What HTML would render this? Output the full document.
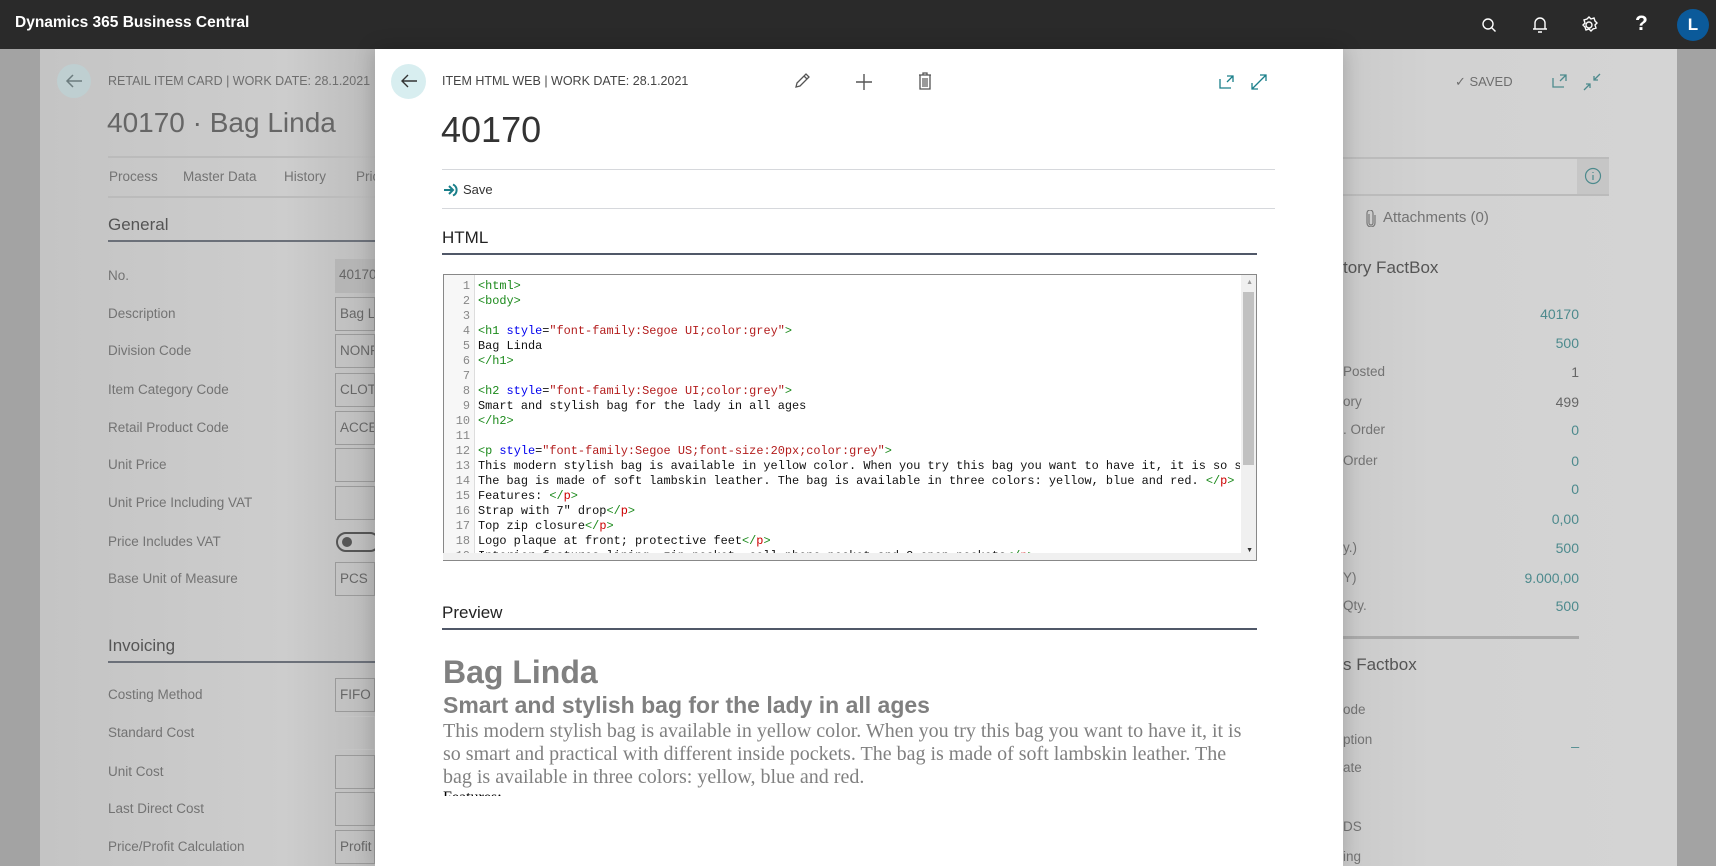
<!DOCTYPE html>
<html><head><meta charset="utf-8"><style>
*{margin:0;padding:0;box-sizing:border-box}
body{width:1716px;height:866px;overflow:hidden;background:#a3a3a3;font-family:"Liberation Sans",sans-serif;position:relative}
.abs{position:absolute;white-space:nowrap}
#top{position:absolute;left:0;top:0;width:1716px;height:49px;background:#2a2a2a}
#panel{position:absolute;left:40px;top:49px;width:1637px;height:817px;background:linear-gradient(90deg,#c4c4c4 0%,#cdcdcd 15%,#bdbdbd 20%,#d0d0d0 72%,#c2c2c2 74%,#d2d2d2 85%,#d4d4d4 100%)}
.g{color:#6e6e6e}
.lab{font-size:13.5px;color:#737373}
.inp{position:absolute;left:335px;width:40px;height:34px;border:1px solid #999;font-size:13.5px;color:#666;padding:8px 4px;overflow:hidden;white-space:nowrap}
.v{position:absolute;right:137px;font-size:14px;color:#4d8a8d;text-align:right}
#modal{position:absolute;left:375px;top:49px;width:968px;height:817px;background:#fff;box-shadow:0 0 20px rgba(0,0,0,.2)}
.code{position:absolute;left:478px;font-family:"Liberation Mono",monospace;font-size:11.9px;color:#111;white-space:pre;line-height:15px}
.ln{position:absolute;left:443px;width:27px;text-align:right;font-family:"Liberation Mono",monospace;font-size:11.9px;color:#888;line-height:15px}
.t{color:#1c8a1c}.a{color:#0000ee}.s{color:#b31d1d}.r{color:#c00}
</style></head><body>
<div id="top"><div class="abs" style="left:15px;top:14px;color:#fff;font-size:15.5px;font-weight:bold">Dynamics 365 Business Central</div>
<svg class="abs" style="left:1480px;top:16px" width="18" height="18" fill="none" stroke="#fff" stroke-width="1.4"><circle cx="8" cy="8" r="5"/><path d="M11.5 11.5l4 4"/></svg>
<svg class="abs" style="left:1531px;top:15px" width="18" height="20" fill="none" stroke="#fff" stroke-width="1.4"><path d="M4 14V8a5 5 0 0110 0v6H4zM2 14h14M7 17h4"/></svg>
<svg class="abs" style="left:1579px;top:15px" width="20" height="20" fill="none" stroke="#fff" stroke-width="1.4"><circle cx="10" cy="10" r="3"/><path d="M10 2l2 2 3-1 1 3 2 2-2 2 1 3-3 1-2 2-2-2-3 1-1-3-2-2 2-2-1-3 3-1z"/></svg>
<div class="abs" style="left:1635px;top:12px;color:#fff;font-size:21px;font-weight:bold">?</div>
<div class="abs" style="left:1677px;top:9px;width:32px;height:32px;border-radius:50%;background:#0b5a9a;color:#fff;font-size:17px;text-align:center;line-height:32px;font-weight:bold">L</div>
</div>
<div id="panel"></div>
<div class="abs" style="left:57px;top:64px;width:34px;height:34px;border-radius:50%;background:#bfcfd1"></div>
<svg class="abs" style="left:64px;top:72px" width="20" height="18" fill="none" stroke="#6c7c7e" stroke-width="1.5"><path d="M18 9H3M9 3L3 9l6 6"/></svg>
<div class="abs g" style="left:108px;top:74px;font-size:12.5px">RETAIL ITEM CARD | WORK DATE: 28.1.2021</div>
<div class="abs g" style="left:107px;top:107px;font-size:28px;color:#666">40170 · Bag Linda</div>
<div class="abs" style="left:108px;top:156px;width:270px;border-top:2px solid #bbb"></div>
<div class="abs lab" style="left:109px;top:169px">Process</div><div class="abs lab" style="left:183px;top:169px">Master Data</div><div class="abs lab" style="left:284px;top:169px">History</div><div class="abs lab" style="left:356px;top:169px">Pric</div>
<div class="abs" style="left:108px;top:196px;width:270px;border-top:2px solid #bbb"></div>
<div class="abs" style="left:108px;top:215px;font-size:17px;color:#555">General</div>
<div class="abs" style="left:108px;top:240px;width:270px;border-top:2px solid #6b7079"></div>
<div class="abs" style="left:108px;top:636px;font-size:17px;color:#555">Invoicing</div>
<div class="abs" style="left:108px;top:661px;width:270px;border-top:2px solid #6b7079"></div>
<div class="abs lab" style="left:108px;top:268px">No.</div><div class="inp" style="top:259px;background:#b5b5b5;border:none">40170</div>
<div class="abs lab" style="left:108px;top:306px">Description</div><div class="inp" style="top:297px">Bag Linda</div>
<div class="abs lab" style="left:108px;top:343px">Division Code</div><div class="inp" style="top:334px">NONF</div>
<div class="abs lab" style="left:108px;top:382px">Item Category Code</div><div class="inp" style="top:373px">CLOTH</div>
<div class="abs lab" style="left:108px;top:420px">Retail Product Code</div><div class="inp" style="top:411px">ACCES</div>
<div class="abs lab" style="left:108px;top:457px">Unit Price</div><div class="inp" style="top:448px"></div>
<div class="abs lab" style="left:108px;top:495px">Unit Price Including VAT</div><div class="inp" style="top:486px"></div>
<div class="abs lab" style="left:108px;top:534px">Price Includes VAT</div><div class="abs" style="left:336px;top:532px;width:44px;height:20px;border:2px solid #555;border-radius:10px"><div style="width:10px;height:10px;border-radius:50%;background:#555;margin:3px 4px"></div></div>
<div class="abs lab" style="left:108px;top:571px">Base Unit of Measure</div><div class="inp" style="top:562px">PCS</div>
<div class="abs lab" style="left:108px;top:687px">Costing Method</div><div class="inp" style="top:678px">FIFO</div>
<div class="abs lab" style="left:108px;top:725px">Standard Cost</div><div class="inp" style="top:716px;border-color:#c4c4c4"></div>
<div class="abs lab" style="left:108px;top:764px">Unit Cost</div><div class="inp" style="top:755px"></div>
<div class="abs lab" style="left:108px;top:801px">Last Direct Cost</div><div class="inp" style="top:792px"></div>
<div class="abs lab" style="left:108px;top:839px">Price/Profit Calculation</div><div class="inp" style="top:830px">Profit</div>
<div class="abs g" style="left:1455px;top:74px;font-size:13px">✓ SAVED</div>
<svg class="abs" style="left:1551px;top:73px" width="18" height="16" fill="none" stroke="#4d8a8d" stroke-width="1.3"><path d="M2 5v9h11M9 2h6v6M15 2l-6 6"/></svg>
<svg class="abs" style="left:1583px;top:73px" width="18" height="18" fill="none" stroke="#4d8a8d" stroke-width="1.3"><path d="M17 1l-6 6M11 3v4h4M1 17l6-6M3 11h4v4"/></svg>
<div class="abs" style="left:1342px;top:157px;width:267px;height:39px;border-top:2px solid #bbb;border-bottom:2px solid #bbb"></div>
<div class="abs" style="left:1577px;top:159px;width:32px;height:35px;background:#c6c6c6"></div>
<svg class="abs" style="left:1584px;top:167px" width="18" height="18" fill="none" stroke="#4d8a8d" stroke-width="1.2"><circle cx="9" cy="9" r="7.5"/><path d="M9 8v5M9 5v1"/></svg>
<svg class="abs" style="left:1366px;top:210px" width="10" height="17" fill="none" stroke="#777" stroke-width="1.2"><path d="M3 4v9a2 2 0 004 0V3a3 3 0 00-6 0v10a4 4 0 008 0V5"/></svg>
<div class="abs lab" style="left:1383px;top:209px;font-size:15px">Attachments (0)</div>
<div class="abs" style="left:1343px;top:258px;font-size:17px;color:#555">tory FactBox</div>
<div class="v" style="top:306px">40170</div><div class="v" style="top:335px">500</div>
<div class="abs lab" style="left:1343px;top:364px">Posted</div><div class="v" style="top:364px;color:#666">1</div>
<div class="abs lab" style="left:1343px;top:394px">ory</div><div class="v" style="top:394px;color:#666">499</div>
<div class="abs lab" style="left:1343px;top:422px">. Order</div><div class="v" style="top:422px">0</div>
<div class="abs lab" style="left:1343px;top:453px">Order</div><div class="v" style="top:453px">0</div>
<div class="v" style="top:481px">0</div><div class="v" style="top:511px">0,00</div>
<div class="abs lab" style="left:1343px;top:540px">y.)</div><div class="v" style="top:540px">500</div>
<div class="abs lab" style="left:1343px;top:570px">Y)</div><div class="v" style="top:570px">9.000,00</div>
<div class="abs lab" style="left:1343px;top:598px">Qty.</div><div class="v" style="top:598px">500</div>
<div class="abs" style="left:1343px;top:636px;width:236px;border-top:3px solid #aaa"></div>
<div class="abs" style="left:1343px;top:655px;font-size:17px;color:#555">s Factbox</div>
<div class="abs lab" style="left:1343px;top:702px">ode</div><div class="abs lab" style="left:1343px;top:732px">ption</div><div class="v" style="top:732px">_</div>
<div class="abs lab" style="left:1343px;top:760px">ate</div><div class="abs lab" style="left:1343px;top:819px">DS</div><div class="abs lab" style="left:1343px;top:849px">ing</div>
<div id="modal"></div>
<div class="abs" style="left:391px;top:64px;width:35px;height:35px;border-radius:50%;background:#d8eef0"></div>
<svg class="abs" style="left:399px;top:72px" width="20" height="18" fill="none" stroke="#333" stroke-width="1.4"><path d="M18 9H3M9 3L3 9l6 6"/></svg>
<div class="abs" style="left:442px;top:74px;font-size:12.5px;color:#444">ITEM HTML WEB | WORK DATE: 28.1.2021</div>
<svg class="abs" style="left:793px;top:72px" width="18" height="18" fill="none" stroke="#555" stroke-width="1.3"><path d="M3 15l1-4 9-9 3 3-9 9zM11 4l3 3"/></svg>
<svg class="abs" style="left:855px;top:73px" width="18" height="18" fill="none" stroke="#555" stroke-width="1.4"><path d="M9 1v16M1 9h16"/></svg>
<svg class="abs" style="left:918px;top:72px" width="14" height="18" fill="none" stroke="#555" stroke-width="1.3"><path d="M1 3h12M5 3V1h4v2M2 3v14h10V3"/><rect x="4" y="6" width="6" height="9" fill="#999" stroke="none"/></svg>
<svg class="abs" style="left:1218px;top:74px" width="18" height="16" fill="none" stroke="#1a7f8a" stroke-width="1.3"><path d="M2 5v9h11M9 2h6v6M15 2l-6 6"/></svg>
<svg class="abs" style="left:1250px;top:73px" width="18" height="18" fill="none" stroke="#1a7f8a" stroke-width="1.3"><path d="M2 16L16 2M10 2h6v6M2 10v6h6"/></svg>
<div class="abs" style="left:441px;top:109px;font-size:36px;color:#333">40170</div>
<div class="abs" style="left:442px;top:169px;width:833px;border-top:1.5px solid #d6d8dc"></div>
<svg class="abs" style="left:443px;top:183px" width="16" height="14" fill="none" stroke="#1a7f8a" stroke-width="2"><path d="M1 7h8M6 3l4 4-4 4M10 1.5a6 6 0 010 11"/></svg>
<div class="abs" style="left:463px;top:182px;font-size:13px;color:#333">Save</div>
<div class="abs" style="left:442px;top:208px;width:833px;border-top:1.5px solid #d6d8dc"></div>
<div class="abs" style="left:442px;top:228px;font-size:17px;color:#222">HTML</div>
<div class="abs" style="left:442px;top:253px;width:815px;border-top:2px solid #505868"></div>
<div class="abs" style="left:443px;top:274px;width:814px;height:287px;border:1px solid #888;overflow:hidden;background:#fff">
<div style="position:absolute;left:0;top:0;width:31px;height:100%;background:#f7f7f7;border-right:1px solid #ddd"></div>
<div style="position:absolute;right:0;top:0;width:15px;height:100%;background:#f0f0f0"></div>
<div style="position:absolute;right:2px;top:17px;width:11px;height:173px;background:#c1c1c1"></div>
<div style="position:absolute;right:3px;top:4px;font-size:7px;color:#999">▲</div>
<div style="position:absolute;right:3px;bottom:6px;font-size:7px;color:#333">▼</div>
</div>
<div style="position:absolute;left:0;top:279px;width:1240px;height:281px;overflow:hidden">
<div class="ln" style="top:0">1<br>2<br>3<br>4<br>5<br>6<br>7<br>8<br>9<br>10<br>11<br>12<br>13<br>14<br>15<br>16<br>17<br>18<br>19</div>
<div class="code" style="top:0;width:762px;overflow:hidden"><span class="t">&lt;html&gt;</span>
<span class="t">&lt;body&gt;</span>

<span class="t">&lt;h1 </span><span class="a">style</span>=<span class="s">"font-family:Segoe UI;color:grey"</span><span class="t">&gt;</span>
Bag Linda
<span class="t">&lt;/h1&gt;</span>

<span class="t">&lt;h2 </span><span class="a">style</span>=<span class="s">"font-family:Segoe UI;color:grey"</span><span class="t">&gt;</span>
Smart and stylish bag for the lady in all ages
<span class="t">&lt;/h2&gt;</span>

<span class="t">&lt;p </span><span class="a">style</span>=<span class="s">"font-family:Segoe US;font-size:20px;color:grey"</span><span class="t">&gt;</span>
This modern stylish bag is available in yellow color. When you try this bag you want to have it, it is so smart
The bag is made of soft lambskin leather. The bag is available in three colors: yellow, blue and red. <span class="t">&lt;/</span><span class="r">p</span><span class="t">&gt;</span>
Features: <span class="t">&lt;/</span><span class="r">p</span><span class="t">&gt;</span>
Strap with 7" drop<span class="t">&lt;/</span><span class="r">p</span><span class="t">&gt;</span>
Top zip closure<span class="t">&lt;/</span><span class="r">p</span><span class="t">&gt;</span>
Logo plaque at front; protective feet<span class="t">&lt;/</span><span class="r">p</span><span class="t">&gt;</span>
Interior features lining, zip pocket, cell phone pocket and 2 open pockets<span class="t">&lt;/</span><span class="r">p</span><span class="t">&gt;</span></div>
</div>
<div class="abs" style="left:443px;top:553px;width:798px;height:7px;background:#f0f0f0"></div>
<div class="abs" style="left:442px;top:603px;font-size:17px;color:#222">Preview</div>
<div class="abs" style="left:442px;top:628px;width:815px;border-top:2px solid #505868"></div>
<div style="position:absolute;left:443px;top:652px;width:800px;height:144px;overflow:hidden;color:grey">
<div style="font-size:32px;font-weight:bold;line-height:40px">Bag Linda</div>
<div style="font-size:23px;font-weight:bold;line-height:30px;margin-top:-2px">Smart and stylish bag for the lady in all ages</div>
<div style="font-family:'Liberation Serif',serif;font-size:20px;line-height:23px;width:800px;white-space:normal">This modern stylish bag is available in yellow color. When you try this bag you want to have it, it is so smart and practical with different inside pockets. The bag is made of soft lambskin leather. The bag is available in three colors: yellow, blue and red.</div>
<div style="font-family:'Liberation Serif',serif;font-size:16px;color:#000">Features:</div>
</div>
</body></html>
